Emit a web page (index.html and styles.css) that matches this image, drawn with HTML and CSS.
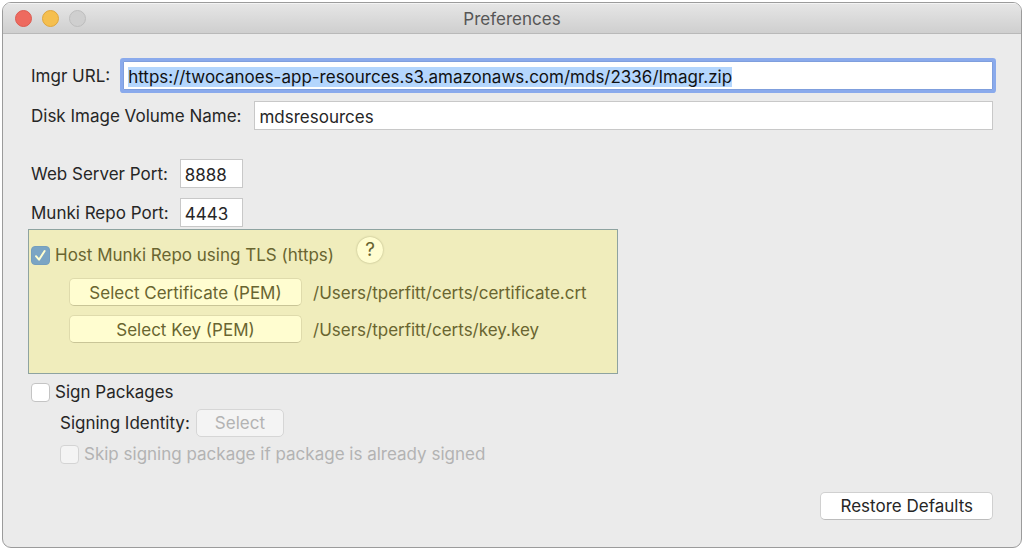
FILE: index.html
```html
<!DOCTYPE html>
<html lang="en">
<head>
    <meta charset="UTF-8">
    <meta name="viewport" content="width=device-width, initial-scale=1.0">
    <title>Preferences</title>
    <link rel="stylesheet" href="styles.css">
</head>
<body>
    <div class="window">
        <header class="titlebar">
            <div class="lights">
                <button class="light close" aria-label="Close"></button>
                <button class="light minimize" aria-label="Minimize"></button>
                <button class="light zoom" aria-label="Zoom" disabled></button>
            </div>
            <h1>Preferences</h1>
        </header>

        <form class="content">
            <div class="row url-row">
                <label for="imgrUrl">Imgr URL:</label>
                <input type="text" id="imgrUrl" class="field wide" value="https://twocanoes-app-resources.s3.amazonaws.com/mds/2336/Imagr.zip" spellcheck="false">
            </div>
            <div class="row">
                <label for="volumeName">Disk Image Volume Name:</label>
                <input type="text" id="volumeName" class="field wide" value="mdsresources" spellcheck="false">
            </div>

            <div class="ports">
                <label for="webPort">Web Server Port:</label>
                <input type="text" id="webPort" class="field" value="8888">
                <label for="munkiPort">Munki Repo Port:</label>
                <input type="text" id="munkiPort" class="field" value="4443">
            </div>

            <section class="tls">
                <div class="tls-head">
                    <label class="check"><input type="checkbox" checked>Host Munki Repo using TLS (https)</label>
                    <button type="button" class="help" aria-label="Help">?</button>
                </div>
                <div class="certs">
                    <button type="button" class="btn">Select Certificate (PEM)</button>
                    <span>/Users/tperfitt/certs/certificate.crt</span>
                    <button type="button" class="btn">Select Key (PEM)</button>
                    <span>/Users/tperfitt/certs/key.key</span>
                </div>
            </section>

            <section class="signing">
                <label class="check"><input type="checkbox">Sign Packages</label>
                <div class="signing-options">
                    <div class="identity">
                        <span>Signing Identity:</span>
                        <button type="button" class="btn" disabled>Select</button>
                    </div>
                    <label class="check disabled"><input type="checkbox" disabled>Skip signing package if package is already signed</label>
                </div>
            </section>

            <footer class="footer">
                <button type="reset" class="btn restore">Restore Defaults</button>
            </footer>
        </form>
    </div>

    <script>
        // Start with the URL focused and selected
        const imgrUrl = document.getElementById('imgrUrl');
        imgrUrl.focus();
        imgrUrl.select();
        imgrUrl.scrollLeft = 0;
    </script>
</body>
</html>
```
FILE: styles.css
```css
* {
    box-sizing: border-box;
}

body {
    margin: 0;
    padding: 2px;
    background: white;
    color: #262626;
    font-family: Inter, "Liberation Sans", sans-serif;
    font-size: 17px;
    line-height: 20px;
}

.window {
    display: flex;
    flex-direction: column;
    min-height: calc(100vh - 4px);
    border: 1px solid #9b9b9b;
    border-radius: 9px;
    background: #ebebeb;
    overflow: hidden;
}

/* Title bar */
.titlebar {
    display: grid;
    grid-template-columns: 1fr auto 1fr;
    align-items: center;
    height: 31px;
    padding: 0 12px;
    border-bottom: 1px solid #b9b9b9;
    background: linear-gradient(#e6e6e6, #cfcfcf);
    box-shadow: inset 0 1px #f4f4f4;
}

.titlebar h1 {
    margin: 0;
    padding-top: 2px;
    font-size: 17px;
    font-weight: 400;
    color: #565656;
}

.lights {
    display: flex;
    gap: 10px;
}

.light {
    width: 17px;
    height: 17px;
    padding: 0;
    border: 1px solid;
    border-radius: 50%;
}

.close {
    background: #ee6a5f;
    border-color: #dc5b51;
}

.minimize {
    background: #f5bf4f;
    border-color: #dfa63c;
}

.zoom {
    background: #cfcfcf;
    border-color: #bdbdbd;
}

/* Form */
.content {
    display: flex;
    flex-direction: column;
    flex: 1;
    padding: 27px 28px;
}

.row {
    display: flex;
    align-items: center;
    gap: 13px;
}

.url-row {
    margin-bottom: 11px;
}

.field {
    height: 29px;
    padding: 2px 4px 0;
    border: 1px solid #c8c8c8;
    border-radius: 0;
    background: white;
    color: #262626;
    font: inherit;
    line-height: 23px;
    outline: none;
}

.field:focus {
    border-color: #7f9fdd;
    color: #111;
    box-shadow: 0 0 0 3px #8aaaec;
    border-radius: 1px;
}

.field::selection {
    background: #b4d6fd;
    color: #111;
}

.wide {
    flex: 1;
    min-width: 0;
}

.ports {
    display: grid;
    grid-template-columns: auto 63px;
    justify-content: start;
    align-items: center;
    gap: 10px 11px;
    margin-top: 29px;
}

.check {
    display: flex;
    align-items: center;
    gap: 5px;
}

.check input {
    appearance: none;
    flex: none;
    width: 19px;
    height: 19px;
    margin: 0;
    border: 1px solid #c4c4c4;
    border-radius: 4px;
    background: white;
}

.check input:checked {
    border-color: #759fbe;
    background: #7ba5c4 url("data:image/svg+xml,%3Csvg xmlns='http://www.w3.org/2000/svg' viewBox='0 0 17 17'%3E%3Cpath d='M4 9.2l3 3.5L12.6 4' fill='none' stroke='%23fffed0' stroke-width='2' stroke-linecap='round' stroke-linejoin='round'/%3E%3C/svg%3E");
}

.check input:disabled {
    border-color: #d4d4d4;
    background: #f4f4f4;
}

.disabled {
    color: #b3b3b3;
}

.btn {
    height: 28px;
    padding: 0 18px;
    border: 1px solid #d0d0d0;
    border-bottom-color: #bcbcbc;
    border-radius: 5px;
    background: white;
    color: #262626;
    font: inherit;
}

.btn:disabled {
    border-color: #d6d6d6;
    background: #f4f4f4;
    color: #b3b3b3;
}

/* Highlighted TLS group */
.tls {
    align-self: flex-start;
    width: 590px;
    max-width: 100%;
    margin: 2px 0 0 -3px;
    padding: 7px 2px 30px;
    border: 1px solid #8ea3a0;
    background: #f0edbc;
    color: #696530;
}

.tls-head {
    display: flex;
    gap: 23px;
}

.tls-head .check {
    padding-top: 8px;
}

.help {
    width: 26px;
    height: 26px;
    padding: 0;
    border: 0;
    border-radius: 50%;
    background: #fffdd0;
    box-shadow: 0 0 2px #aaa777;
    color: #696530;
    font: inherit;
    font-size: 19px;
}

.certs {
    display: grid;
    grid-template-columns: 233px auto;
    justify-content: start;
    align-items: center;
    gap: 9px 11px;
    margin: 13px 0 0 38px;
}

.certs span {
    padding-top: 2px;
}

.certs .btn {
    padding-top: 1px;
    border-color: #dfdbac;
    border-bottom-color: #c9c597;
    background: #fffdd0;
    color: #696530;
}

/* Package signing */
.signing {
    margin-top: 8px;
}

.signing-options {
    margin-left: 29px;
}

.identity {
    display: flex;
    align-items: center;
    gap: 6px;
    margin: 7px 0;
}

.footer {
    display: flex;
    justify-content: flex-end;
    margin-top: auto;
}

.restore {
    padding: 0 19px;
}
```
